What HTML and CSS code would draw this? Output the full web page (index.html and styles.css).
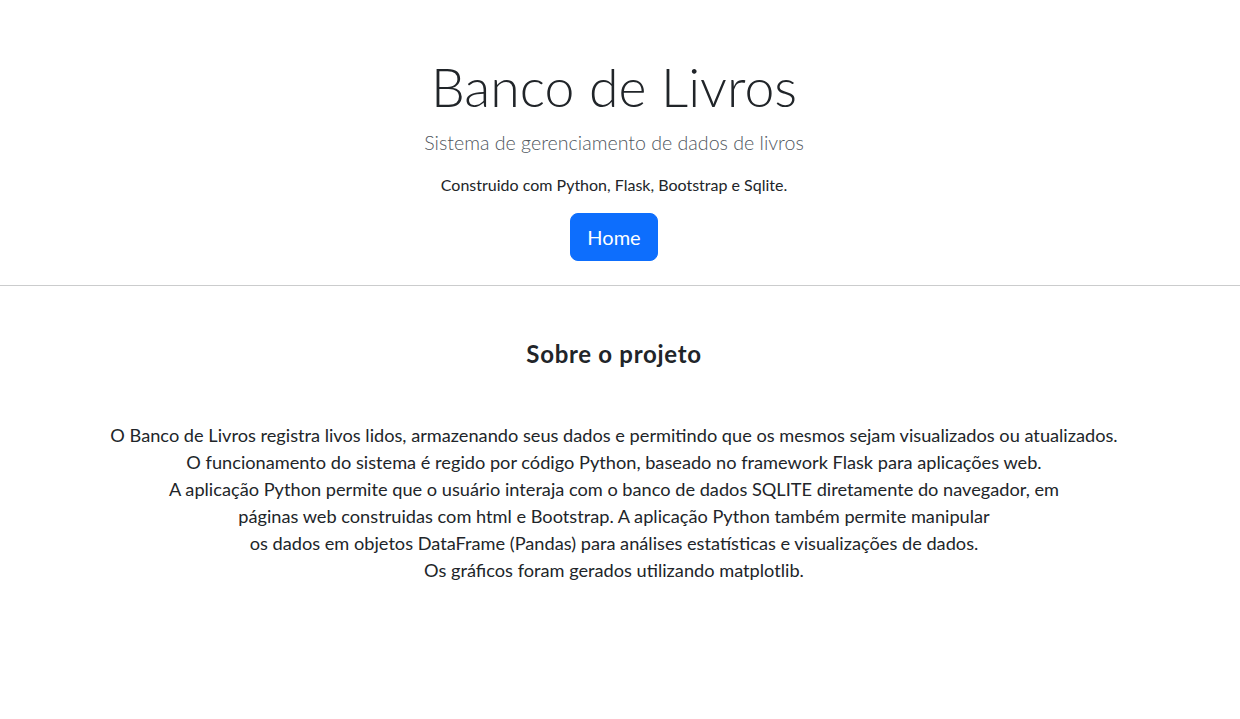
FILE: index.html
```html
<!DOCTYPE html>
<html lang="pt-BR">
<head>
<meta charset="utf-8">
<title>Banco de Livros</title>
<link rel="stylesheet" href="styles.css">
</head>
<body>
<header class="hero">
  <h1 class="hero-title">Banco de Livros</h1>
  <p class="hero-lead">Sistema de gerenciamento de dados de livros</p>
  <p class="hero-built">Construido com Python, Flask, Bootstrap e Sqlite.</p>
  <a class="btn-home" href="#">Home</a>
</header>
<hr class="divider">
<main class="about">
  <h4 class="about-title">Sobre o projeto</h4>
  <p class="about-text">O Banco de Livros registra livos lidos, armazenando seus dados e permitindo que os mesmos sejam visualizados ou atualizados.<br>O funcionamento do sistema é regido por código Python, baseado no framework Flask para aplicações web.<br>A aplicação Python permite que o usuário interaja com o banco de dados SQLITE diretamente do navegador, em<br>páginas web construidas com html e Bootstrap. A aplicação Python também permite manipular<br>os dados em objetos DataFrame (Pandas) para análises estatísticas e visualizações de dados.<br>Os gráficos foram gerados utilizando matplotlib.</p>
</main>
</body>
</html>
```
FILE: styles.css
```css
html, body {
  margin: 0;
  padding: 0;
  background: #ffffff;
}
body {
  font-family: "Lato", "Open Sans", sans-serif;
  color: #212529;
}
.hero {
  display: flex;
  flex-direction: column;
  align-items: center;
  padding: 54px 12px 0 0;
  text-align: center;
}
.hero-title {
  margin: 0;
  font-size: 53.6px;
  font-weight: 300;
  line-height: 64px;
  color: #212529;
}
.hero-lead {
  margin: 11px 0 0;
  font-size: 19.6px;
  font-weight: 300;
  line-height: 28px;
  color: #50575e;
}
.hero-built {
  margin: 16px 0 0;
  font-size: 16px;
  font-weight: 400;
  line-height: 24px;
}
.btn-home {
  display: inline-block;
  margin-top: 16px;
  padding: 8px 16px;
  border: 1px solid #0d6efd;
  border-radius: 8px;
  background: #0d6efd;
  color: #ffffff;
  font-size: 20px;
  line-height: 30px;
  text-decoration: none;
}
.divider {
  margin: 24px 0 0;
  border: 0;
  border-top: 1px solid #cbcccd;
  height: 0;
}
.about {
  padding: 53px 12px 40px 0;
  text-align: center;
}
.about-title {
  margin: 0;
  font-size: 24px;
  font-weight: 700;
  line-height: 29px;
  letter-spacing: 0.7px;
}
.about-text {
  margin: 54px 0 0;
  font-size: 18.2px;
  line-height: 27px;
}
```
